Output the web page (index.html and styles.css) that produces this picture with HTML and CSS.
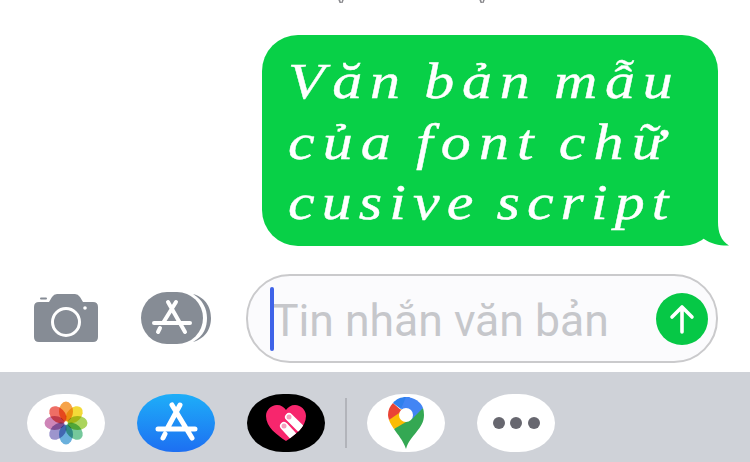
FILE: index.html
```html
<!DOCTYPE html>
<html lang="vi">
<head>
<meta charset="utf-8">
<title>Tin nhắn</title>
<link rel="stylesheet" href="styles.css">
</head>
<body>
<div class="screen">
  <div class="stamp"><span>y</span><span>y</span></div>
  <section class="thread">
    <div class="bubble">
      <p class="line line-a">Văn bản mẫu</p>
      <p class="line line-b">của font chữ</p>
      <p class="line line-c">cusive script</p>
      <svg class="tail" width="30" height="36" viewBox="0 0 30 36"><path d="M0 0H19V12C19 22 22 31 30 35.500C22 36 12 34 5 29L0 24Z" fill="#08d047"/></svg>
    </div>
  </section>
  <section class="composer">
    <svg class="camera" width="64" height="48" viewBox="0 0 64 48">
      <path d="M5 8H15L18 3Q20 0 23 0H41Q44 0 46 3L49 8H59Q64 8 64 13V43Q64 48 59 48H5Q0 48 0 43V13Q0 8 5 8Z" fill="#868c95"/>
      <rect x="6" y="3.500" width="7" height="2" rx="1" fill="#868c95"/>
      <circle cx="32" cy="28" r="13.500" fill="none" stroke="#fff" stroke-width="3"/>
      <circle cx="51" cy="14" r="1.800" fill="#fff"/>
    </svg>
    <svg class="store-btn" width="72" height="54" viewBox="0 0 72 54">
      <path d="M52 2C66 6 70 17 70 26S66 46 52 50C63 44 66 35 66 26S62 8 52 2Z" fill="#868c95"/>
      <rect x="0" y="0" width="62" height="52" rx="26" fill="#868c95"/>
      <g stroke="#fff" fill="none" stroke-linecap="round" stroke-width="4">
        <path d="M35 10L22 31M27 10L44 40M13 31H49M17 40L19 36"/>
      </g>
    </svg>
    <div class="field">
      <span class="caret"></span>
      <span class="placeholder">Tin nhắn văn bản</span>
      <svg class="send" width="52" height="52" viewBox="0 0 52 52">
        <circle cx="26" cy="26" r="26" fill="#06c846"/>
        <path d="M26 39V14M16 24L26 14L36 24" fill="none" stroke="#fff" stroke-width="3.600" stroke-linecap="round" stroke-linejoin="round"/>
      </svg>
    </div>
  </section>
  <nav class="drawer">
    <div class="pill pill-white">
      <svg width="44" height="44" viewBox="-22 -22 44 44">
        <ellipse class="petal" cx="0" cy="-11.500" rx="7" ry="10" fill="#f5962f"/>
        <ellipse class="petal" cx="0" cy="-11.500" rx="7" ry="10" fill="#f2d51c" transform="rotate(45)"/>
        <ellipse class="petal" cx="0" cy="-11.500" rx="7" ry="10" fill="#a0ce45" transform="rotate(90)"/>
        <ellipse class="petal" cx="0" cy="-11.500" rx="7" ry="10" fill="#62c18d" transform="rotate(135)"/>
        <ellipse class="petal" cx="0" cy="-11.500" rx="7" ry="10" fill="#55a5d8" transform="rotate(180)"/>
        <ellipse class="petal" cx="0" cy="-11.500" rx="7" ry="10" fill="#8f86c6" transform="rotate(225)"/>
        <ellipse class="petal" cx="0" cy="-11.500" rx="7" ry="10" fill="#c874ad" transform="rotate(270)"/>
        <ellipse class="petal" cx="0" cy="-11.500" rx="7" ry="10" fill="#ec5a50" transform="rotate(315)"/>
        <circle r="1.500" fill="#fff"/>
      </svg>
    </div>
    <div class="pill pill-blue">
      <svg width="44" height="44" viewBox="0 0 44 44">
        <g stroke="#fff" fill="none" stroke-linecap="round" stroke-width="5">
          <path d="M26 4L13 28M18 4L38 37M4 28H41M9 37L11 33"/>
        </g>
      </svg>
    </div>
    <div class="pill pill-black">
      <svg width="40" height="36" viewBox="0 0 40 36">
        <clipPath id="heart"><path d="M20 36C11 30 0 22 0 11C0 5 5 0 11 0C15 0 18 2 20 5C22 2 25 0 29 0C35 0 40 5 40 11C40 22 29 30 20 36Z"/></clipPath>
        <g clip-path="url(#heart)">
          <rect width="40" height="36" fill="#f7266d"/>
          <g fill="none" stroke="#fff" stroke-linecap="round" stroke-width="8">
            <path d="M23 12L38 27"/>
            <path d="M18 21L29 33"/>
          </g>
          <circle cx="23" cy="12" r="2.500" fill="#f79dbd"/>
          <circle cx="18" cy="21" r="2.500" fill="#f79dbd"/>
        </g>
      </svg>
    </div>
    <span class="divider"></span>
    <div class="pill pill-white">
      <svg width="36" height="52" viewBox="0 0 36 52">
        <path d="M18 52C15 43 10 38 6 32L18 18L35 11Q36 14 36 18C36 32 22 38 18 52Z" fill="#34a853"/>
        <path d="M6 32C4 29 2 26 1 23L13 12L24 18L18 25Z" fill="#fbbc04"/>
        <path d="M1 23Q0 20 0 18C0 13 2 9 5 6L14 14Z" fill="#ea4335"/>
        <path d="M5 6C8 2 13 0 18 0L22 0L13 12Z" fill="#2f80ed"/>
        <path d="M18 0C26 0 33 5 35 11L24 22L13 12Z" fill="#4285f4"/>
        <circle cx="18" cy="18" r="7" fill="#fff"/>
      </svg>
    </div>
    <div class="pill pill-white">
      <div class="dots"><i></i><i></i><i></i></div>
    </div>
  </nav>
</div>
</body>
</html>
```
FILE: styles.css
```css
* { box-sizing: border-box; }
html, body { margin: 0; padding: 0; }
body { background: #fff; }
.screen {
  width: 750px;
  height: 462px;
  overflow: hidden;
  display: flex;
  flex-direction: column;
  background: #fff;
}
.stamp {
  height: 3px;
  overflow: hidden;
  display: flex;
  gap: 131px;
  padding-left: 336px;
  align-items: flex-end;
  font: 20px/20px "Liberation Sans", sans-serif;
  color: #8a8a8e;
}
.stamp span { display: block; margin-bottom: -5px; }
.thread {
  height: 269px;
  padding: 32px 32px 0 262px;
}
.bubble {
  position: relative;
  height: 211px;
  padding: 16px 0 0 26px;
  border-radius: 36px;
  background: #08d047;
  color: #fff;
}
.line {
  margin: 0;
  font: italic 50px/60.500px "Liberation Serif", serif;
  word-spacing: -5px;
  white-space: nowrap;
  -webkit-text-stroke: 0.4px #fff;
  transform: scaleX(1.2);
  transform-origin: left center;
}
.line-a { letter-spacing: 6.400px; }
.line-b { letter-spacing: 6.750px; }
.line-c { letter-spacing: 5.900px; }
.tail { position: absolute; right: -11px; bottom: 0; }
.composer {
  height: 100px;
  padding: 2px 32px 0 34px;
  display: flex;
  align-items: flex-start;
}
.camera { margin-top: 20px; flex: none; }
.store-btn { margin: 18px 0 0 43px; flex: none; width: 72px; }
.field {
  position: relative;
  width: 472px;
  height: 89px;
  margin-left: 33px;
  padding: 0 8px 0 24px;
  display: flex;
  align-items: center;
  justify-content: space-between;
  border: 2px solid #cacacc;
  border-radius: 44px;
  background: #fbfbfd;
}
.caret {
  position: absolute;
  left: 22px;
  top: 11px;
  width: 4px;
  height: 64px;
  border-radius: 2px;
  background: #3f63e8;
}
.placeholder {
  margin-top: 6px;
  font: 44.500px/1 Roboto, sans-serif;
  color: #c6c7cb;
  white-space: nowrap;
}
.send { flex: none; }
.drawer {
  flex: 1;
  padding: 22px 0 0 27px;
  display: flex;
  align-items: flex-start;
  background: #cfd2d8;
}
.pill {
  flex: none;
  width: 78px;
  height: 58px;
  margin-right: 32px;
  display: flex;
  align-items: center;
  justify-content: center;
  border-radius: 36px / 29px;
}
.pill-white { background: #fff; }
.pill-blue { background: linear-gradient(#1eaef8, #1d6ff2); }
.pill-black { background: #000; }
.petal { mix-blend-mode: multiply; opacity: .88; }
.divider {
  flex: none;
  width: 2px;
  height: 50px;
  margin: 4px 20px 0 -12px;
  background: #b2b4ba;
}
.dots { display: flex; gap: 5.500px; }
.dots i {
  display: block;
  width: 12px;
  height: 12px;
  border-radius: 50%;
  background: #67676f;
}
```
